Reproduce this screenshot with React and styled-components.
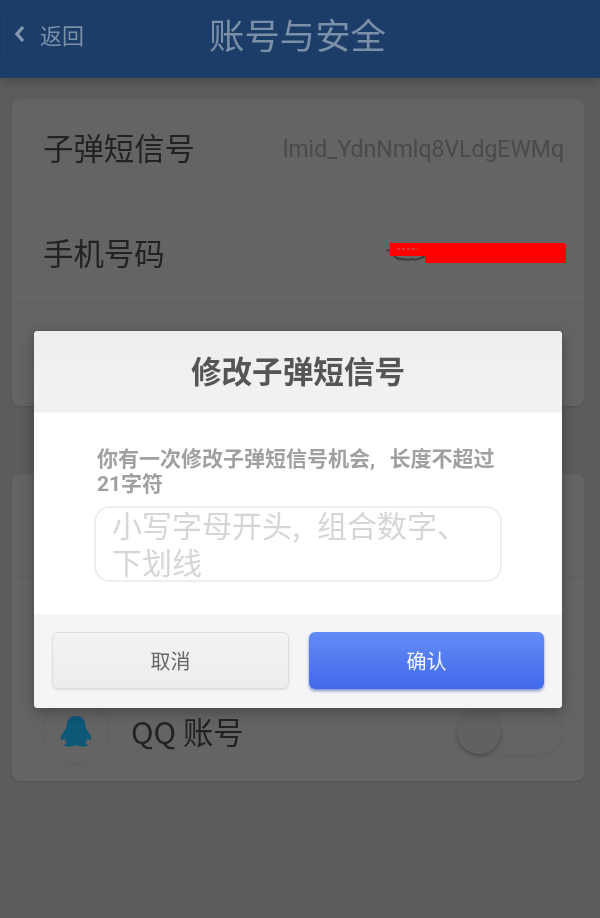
import React from "react";
import styled, { createGlobalStyle } from "styled-components";

const Global = createGlobalStyle`
  html, body { margin: 0; padding: 0; background: #5c5c5c; }
  body { font-family: Roboto, "Noto Sans CJK SC", sans-serif; }
  * { box-sizing: border-box; }
`;

const Page = styled.div`
  position: relative;
  width: 600px;
  height: 918px;
  overflow: hidden;
  background: #5c5c5c;
  filter: blur(0.45px);
`;

const TopBar = styled.header`
  height: 78px;
  display: grid;
  grid-template-columns: 1fr auto 1fr;
  align-items: center;
  padding: 0 4px;
  background: #1b3d68;
  box-shadow: 0 3px 10px rgba(0, 0, 0, 0.2);
`;

const BackButton = styled.button`
  justify-self: start;
  width: 98px;
  height: 49px;
  margin-top: -6px;
  display: flex;
  align-items: center;
  gap: 15px;
  padding: 0 0 4px 9px;
  border: 1px solid #1f4270;
  border-radius: 6px;
  background: transparent;
  color: #7b8fa8;
  font: 22px "Noto Sans CJK SC", sans-serif;
`;

const Title = styled.h1`
  margin: -10px 5px 0 0;
  color: #7b8fa8;
  font: 400 35.4px/1.2 "Noto Sans CJK SC", sans-serif;
`;

const Content = styled.main`
  display: flex;
  flex-direction: column;
  gap: 68px;
  padding: 21px 16px 0 12px;
`;

const Card = styled.section`
  border-radius: 8px;
  background: #646464;
  box-shadow: 0 1px 2px rgba(0, 0, 0, 0.12);
`;

const Row = styled.div`
  height: ${(p) => p.$h || 102}px;
  display: flex;
  align-items: center;
  justify-content: space-between;
  padding: ${(p) => p.$top || 0}px 20px ${(p) => p.$bottom || 0}px 31px;
  border-bottom: ${(p) => (p.$last ? "none" : "1px solid #5f5f5f")};
`;

const Label = styled.span`
  color: #222;
  font: 400 30.4px "Noto Sans CJK SC", sans-serif;
`;

const Value = styled.span`
  margin-top: 6px;
  color: #4a4a4a;
  font: 400 23px Roboto, sans-serif;
`;

const Redaction = styled.svg`
  display: block;
  margin: 5px -3px 0 0;
`;

const Identity = styled.div`
  display: flex;
  align-items: center;
  gap: 22px;
  margin-left: -1px;
`;

const Avatar = styled.div`
  width: 67px;
  height: 67px;
  display: flex;
  align-items: center;
  justify-content: center;
  border: 1px solid #5f5f5f;
  border-radius: 50%;
`;

const Switch = styled.div`
  position: relative;
  width: 106px;
  height: 44px;
  margin: 3px 1px 0 0;
  border-radius: 22px;
  box-shadow: inset 0 0 2px rgba(0, 0, 0, 0.1), 0 1px 1px rgba(0, 0, 0, 0.04);
`;

const Knob = styled.span`
  position: absolute;
  left: 0;
  top: -1px;
  width: 44px;
  height: 44px;
  border-radius: 50%;
  background: #616161;
  box-shadow: 0 2px 4px rgba(0, 0, 0, 0.24);
`;

const Scrim = styled.div`
  position: absolute;
  inset: 0;
  padding: 331px 38px 0 34px;
`;

const Dialog = styled.div`
  height: 377px;
  display: flex;
  flex-direction: column;
  overflow: hidden;
  border-radius: 4px;
  background: #fff;
  box-shadow: 0 4px 14px rgba(0, 0, 0, 0.3);
`;

const DialogHead = styled.div`
  height: 82px;
  display: flex;
  align-items: center;
  justify-content: center;
  padding-bottom: 4px;
  border-bottom: 1px solid #f7f7f7;
  background: linear-gradient(#eeeeee, #f2f2f2);
  color: #555;
  font: 700 30.6px "Noto Sans CJK SC", sans-serif;
`;

const DialogBody = styled.div`
  flex: 1;
  display: flex;
  flex-direction: column;
  padding: 34px 60px 0;
`;

const Hint = styled.p`
  width: 402px;
  margin: 0 0 9px 3px;
  color: #a0a0a0;
  font: 700 21px/25px Roboto, "Noto Sans CJK SC", sans-serif;
  word-spacing: 9px;
`;

const Field = styled.div`
  height: 76px;
  padding: 0 16px;
  border: 2px solid #eeeeee;
  border-radius: 16px;
  color: #d6d6d6;
  font: 400 30px/37px "Noto Sans CJK SC", sans-serif;
  word-spacing: 10px;
`;

const Placeholder = styled.div`
  margin-top: -2px;
`;

const DialogFoot = styled.div`
  height: 94px;
  display: flex;
  gap: 20px;
  padding: 18px 18px 0;
  background: #f5f5f6;
`;

const ActionButton = styled.button`
  flex: 1;
  height: 57px;
  border-radius: 6px;
  font: 400 20px "Noto Sans CJK SC", sans-serif;
  border: ${(p) => (p.$primary ? "none" : "1px solid #dedede")};
  color: ${(p) => (p.$primary ? "#f4f7ff" : "#666")};
  background: ${(p) =>
    p.$primary
      ? "linear-gradient(#648cf6, #4169eb)"
      : "linear-gradient(#f3f3f3, #ececec)"};
  box-shadow: ${(p) =>
    p.$primary
      ? "0 2px 3px rgba(40, 70, 170, 0.55)"
      : "0 1px 2px rgba(0, 0, 0, 0.1)"};
`;

const Chevron = () => (
  <svg width="11" height="18" viewBox="0 0 11 18" fill="none">
    <path d="M9 2 L3 9 L9 16" stroke="#8397b0" strokeWidth="3.4" />
  </svg>
);

const Penguin = () => (
  <svg width="32" height="31" viewBox="0 0 32 31" fill="#0d5777">
    <path d="M16 0 C9 0 6.5 5 6.5 10 C6.5 12 5.5 13 4 15.5 C2 18.5 0 21 1 23.5 C2 24.5 3.5 23.5 4.5 22 C5 24 6 25.5 7 26.5 C5 27.5 4 28.5 4.5 29.5 C5.5 31 11 31 14 29.5 L18 29.5 C21 31 26.5 31 27.5 29.5 C28 28.5 27 27.5 25 26.5 C26 25.5 27 24 27.5 22 C28.5 23.5 30 24.5 31 23.5 C32 21 30 18.5 28 15.5 C26.5 13 25.5 12 25.5 10 C25.5 5 23 0 16 0 Z" />
  </svg>
);

const PhoneRedaction = () => (
  <Redaction width="181" height="24" viewBox="0 0 181 24">
    <path d="M0 8.5 H6" stroke="#3a3a3a" strokeWidth="1.5" />
    <path d="M8 14 q4 4 9 3 q5 1.5 9 0 q5 1.5 9 -1 l4 -2" stroke="#3c3c3c" strokeWidth="2" fill="none" />
    <path d="M4 1 H178 L180 3 V21 H39 V14 H4 Z" fill="#ff0000" />
    <path d="M11 7 H32" stroke="#d23a3a" strokeWidth="2" strokeDasharray="3 2" />
  </Redaction>
);

export default function App() {
  return (
    <Page>
      <Global />
      <TopBar>
        <BackButton>
          <Chevron />
          返回
        </BackButton>
        <Title>账号与安全</Title>
        <span />
      </TopBar>
      <Content>
        <Card>
          <Row $h={103} $bottom={7}>
            <Label>子弹短信号</Label>
            <Value>lmid_YdnNmlq8VLdgEWMq</Value>
          </Row>
          <Row $bottom={2}>
            <Label>手机号码</Label>
            <PhoneRedaction />
          </Row>
          <Row $last />
        </Card>
        <Card>
          <Row $h={103} />
          <Row />
          <Row $top={2} $last>
            <Identity>
              <Avatar>
                <Penguin />
              </Avatar>
              <Label>QQ 账号</Label>
            </Identity>
            <Switch>
              <Knob />
            </Switch>
          </Row>
        </Card>
      </Content>
      <Scrim>
        <Dialog>
          <DialogHead>修改子弹短信号</DialogHead>
          <DialogBody>
            <Hint>你有一次修改子弹短信号机会, 长度不超过21字符</Hint>
            <Field>
              <Placeholder>小写字母开头, 组合数字、下划线</Placeholder>
            </Field>
          </DialogBody>
          <DialogFoot>
            <ActionButton>取消</ActionButton>
            <ActionButton $primary>确认</ActionButton>
          </DialogFoot>
        </Dialog>
      </Scrim>
    </Page>
  );
}
